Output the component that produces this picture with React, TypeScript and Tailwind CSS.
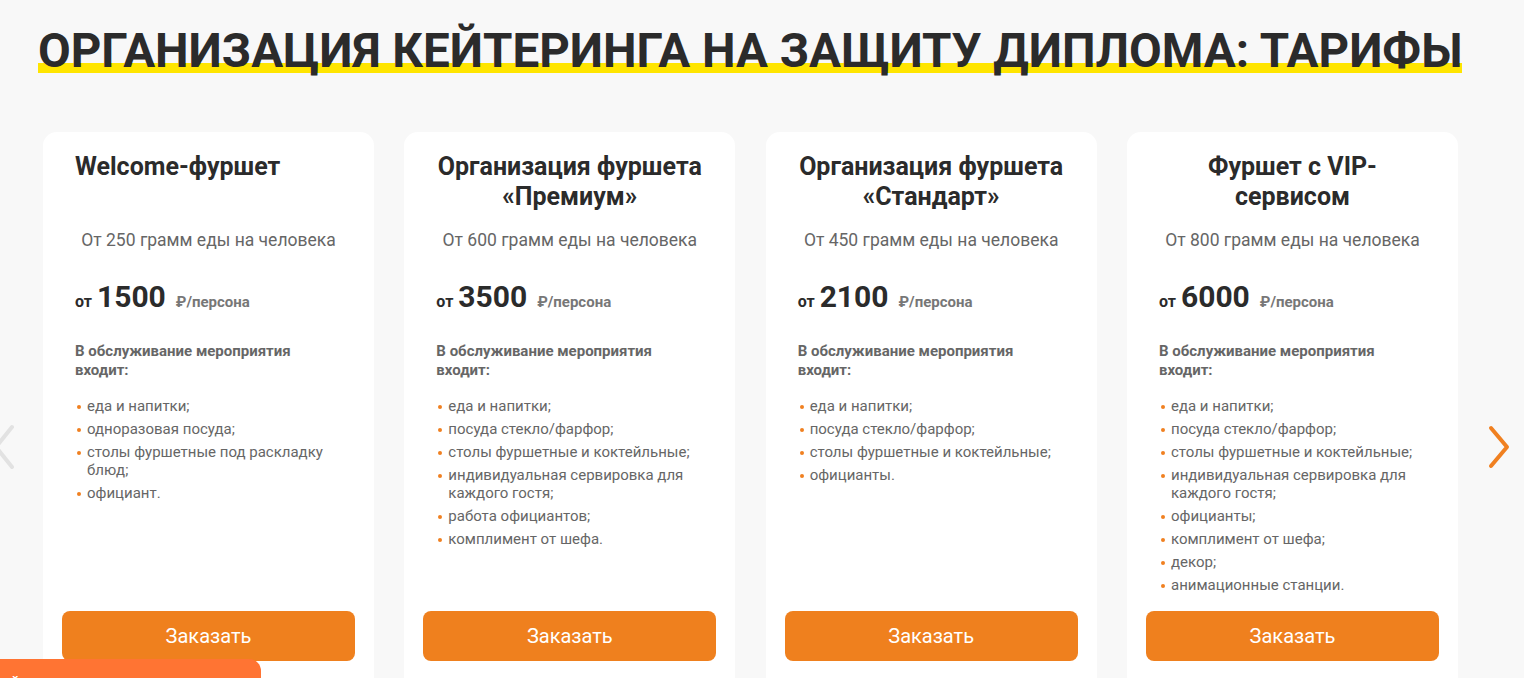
import React from 'react';

interface Tariff {
  title: string[];
  left?: boolean;
  grams: string;
  price: string;
  items: string[];
}

const tariffs: Tariff[] = [
  {
    title: ['Welcome-фуршет'],
    left: true,
    grams: 'От 250 грамм еды на человека',
    price: '1500',
    items: ['еда и напитки;', 'одноразовая посуда;', 'столы фуршетные под раскладку блюд;', 'официант.'],
  },
  {
    title: ['Организация фуршета', '«Премиум»'],
    grams: 'От 600 грамм еды на человека',
    price: '3500',
    items: [
      'еда и напитки;',
      'посуда стекло/фарфор;',
      'столы фуршетные и коктейльные;',
      'индивидуальная сервировка для каждого гостя;',
      'работа официантов;',
      'комплимент от шефа.',
    ],
  },
  {
    title: ['Организация фуршета', '«Стандарт»'],
    grams: 'От 450 грамм еды на человека',
    price: '2100',
    items: ['еда и напитки;', 'посуда стекло/фарфор;', 'столы фуршетные и коктейльные;', 'официанты.'],
  },
  {
    title: ['Фуршет с VIP-', 'сервисом'],
    grams: 'От 800 грамм еды на человека',
    price: '6000',
    items: [
      'еда и напитки;',
      'посуда стекло/фарфор;',
      'столы фуршетные и коктейльные;',
      'индивидуальная сервировка для каждого гостя;',
      'официанты;',
      'комплимент от шефа;',
      'декор;',
      'анимационные станции.',
    ],
  },
];

const TariffCard = ({ t }: { t: Tariff }) => {
  return (
    <div className="flex h-[560px] flex-col rounded-[14px] bg-white pt-5 pb-[31px]">
      <div className="px-8">
        <h3
          className={
            'min-h-[60px] text-[25px] leading-[30px] font-bold text-[#2b2b2b] ' +
            (t.left ? 'text-left' : 'text-center')
          }
        >
          {t.title.map((line, i) => (
            <div key={i}>{line}</div>
          ))}
        </h3>
        <p className="mt-4 -mx-4 text-center text-[17.5px] leading-6 text-[#666]">{t.grams}</p>
        <div className="mt-[27px] flex items-baseline leading-9 text-[#2b2b2b]">
          <span className="text-[16px] font-bold">от</span>
          <span className="ml-[5px] text-[30px] font-bold">{t.price}</span>
          <span className="ml-[10px] text-[15px] font-bold text-[#777]">₽/персона</span>
        </div>
        <p className="mt-[22px] text-[15px] leading-[19px] font-bold text-[#666]">
          В обслуживание мероприятия
          <br />
          входит:
        </p>
      </div>
      <ul className="mt-[17px] flex-1 space-y-[5px] px-8">
        {t.items.map((item, i) => (
          <li key={i} className="flex text-[15px] leading-[18px] text-[#666]">
            <span className="mt-[8px] mr-[6px] ml-[2px] h-[4px] w-[4px] shrink-0 rounded-full bg-[#f08020]" />
            <span>{item}</span>
          </li>
        ))}
      </ul>
      <button className="mx-[19px] h-[50px] rounded-[8px] bg-[#ef801e] text-[20px] text-white">Заказать</button>
    </div>
  );
};

export default function App() {
  return (
    <div
      className="relative h-[678px] overflow-hidden bg-[#f8f8f8]"
      style={{ fontFamily: 'Roboto, "Noto Sans", sans-serif' }}
    >
      <div className="pt-[23px] pl-[38px]">
        <h1 className="text-[47.5px] leading-[56px] font-bold text-[#2b2b2b]">
          <span className="bg-[linear-gradient(to_top,transparent_6px,#ffe500_6px,#ffe500_16px,transparent_16px)]">
            ОРГАНИЗАЦИЯ КЕЙТЕРИНГА НА ЗАЩИТУ ДИПЛОМА: ТАРИФЫ
          </span>
        </h1>
      </div>

      <div className="mt-[53px] grid w-fit grid-cols-[repeat(4,331px)] gap-[30.33px] pl-[43px]">
        {tariffs.map((t, i) => (
          <TariffCard key={i} t={t} />
        ))}
      </div>

      {/* carousel arrows */}
      <svg className="absolute top-[424px] left-[-12px]" width="28" height="46" viewBox="0 0 28 46" fill="none">
        <path d="M24 3 L8 23 L24 43" stroke="#e2e2e2" strokeWidth="4" strokeLinecap="round" strokeLinejoin="round" />
      </svg>
      <svg className="absolute top-[424px] left-[1487px]" width="24" height="46" viewBox="0 0 24 46" fill="none">
        <path d="M4 4 L20 23 L4 42" stroke="#f08020" strokeWidth="4" strokeLinecap="round" strokeLinejoin="round" />
      </svg>

      {/* widget tab bottom-left */}
      <div className="absolute top-[659px] left-0 h-[40px] w-[261px] rounded-tr-[12px] bg-[#ff7433] pt-[15px] pl-[10px] text-[15px] leading-[20px] font-bold text-white">
        Йа заказать звонок
      </div>
    </div>
  );
}
